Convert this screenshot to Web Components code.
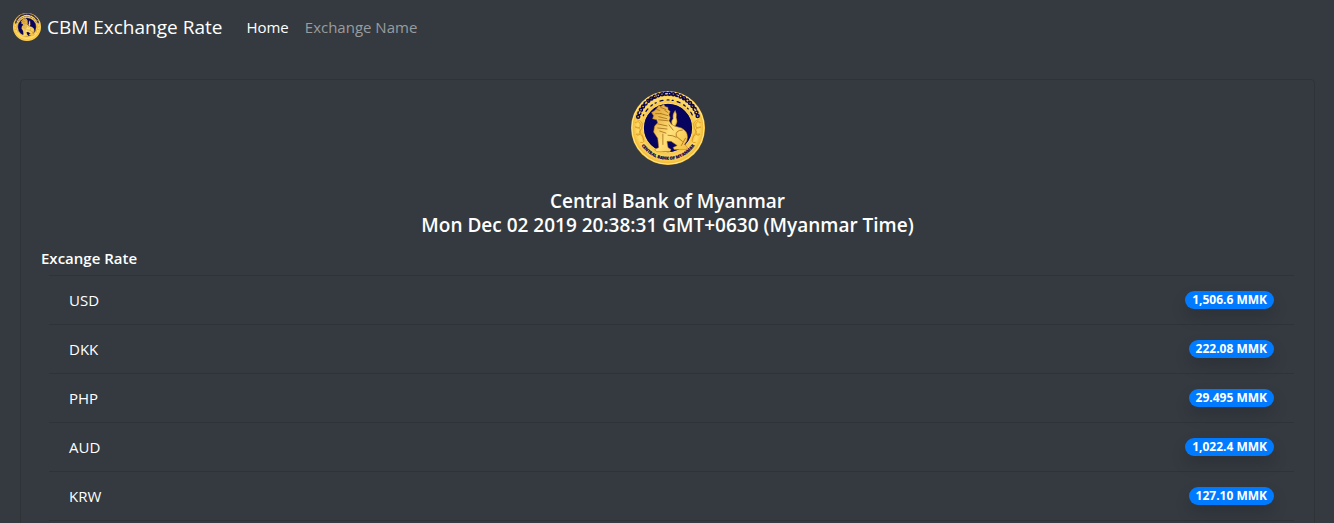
<!DOCTYPE html>
<html lang="en">
<head>
<meta charset="utf-8">
<title>CBM Exchange Rate</title>
<style>
  body { margin: 0; background: #343a40; color: #fff; font: 15px/24px "Open Sans", "Noto Sans", sans-serif; }
</style>
</head>
<body>
<cbm-navbar>
  <cbm-nav-link href="#home" active>Home</cbm-nav-link>
  <cbm-nav-link href="#names">Exchange Name</cbm-nav-link>
</cbm-navbar>
<cbm-card>
  <span slot="title">Central Bank of Myanmar</span>
  <span slot="time">Mon Dec 02 2019 20:38:31 GMT+0630 (Myanmar Time)</span>
  <span slot="label">Excange Rate</span>
  <cbm-rate currency="USD">1,506.6 MMK</cbm-rate>
  <cbm-rate currency="DKK">222.08 MMK</cbm-rate>
  <cbm-rate currency="PHP">29.495 MMK</cbm-rate>
  <cbm-rate currency="AUD">1,022.4 MMK</cbm-rate>
  <cbm-rate currency="KRW">127.10 MMK</cbm-rate>
</cbm-card>

<script>
const define = (name, html, setup) => customElements.define(name, class extends HTMLElement {
  constructor() {
    super();
    this.attachShadow({ mode: 'open' }).innerHTML = html;
  }
  connectedCallback() { if (setup) setup(this, this.shadowRoot); }
});

define('cbm-seal', `
  <style>
    :host { display: block; width: 74px; height: 74px; flex: none; }
    svg { display: block; width: 100%; height: 100%; }
    text { font: 800 4px "Open Sans", sans-serif; fill: #0c0850; stroke: #0c0850; stroke-width: .2px; }
    :host([small]) text { display: none; }
  </style>
  <svg viewBox="0 0 72 72" role="img" aria-label="Central Bank of Myanmar seal">
    <defs>
      <radialGradient id="gold" cx=".5" cy=".5" r=".5">
        <stop offset=".62" stop-color="#f4bd3a"/><stop offset=".82" stop-color="#ffdc68"/><stop offset="1" stop-color="#efae25"/>
      </radialGradient>
      <linearGradient id="lion" x1="0" y1="0" x2="1" y2="1">
        <stop offset="0" stop-color="#dd9a2c"/><stop offset=".55" stop-color="#ffe07a"/><stop offset="1" stop-color="#f3bd3d"/>
      </linearGradient>
      <path id="arc" d="M7 46.500A30.800 30.800 0 0 0 65 46.500"/>
    </defs>
    <circle cx="36" cy="36" r="36" fill="url(#gold)"/>
    <circle cx="36" cy="36" r="35" fill="none" stroke="#ffe98c" stroke-width="1"/>
    <g fill="none" stroke="#dc9820" stroke-width=".8">
      <path d="M4 31q5-3 5 2t-5 2q6 0 5 5t-4 2q5-1 7 4t-3 4M68 31q-5-3-5 2t5 2q-6 0-5 5t4 2q-5-1-7 4t3 4"/>
      <path d="M6 28q5 1 5 5t-3 7q4 2 4 8M66 28q-5 1-5 5t3 7q-4 2-4 8"/>
    </g>
    <circle cx="36" cy="36" r="24" fill="#06045f" stroke="#ffdc69" stroke-width="1"/>
    <g fill="none" stroke-linecap="round">
      <path d="M7 25A30 30 0 0 1 65 25" stroke="#0c0850" stroke-width="4.400" stroke-dasharray="0 3.700"/>
      <path d="M7 25A30 30 0 0 1 65 25" stroke="#f5c548" stroke-width="1.500" stroke-dasharray="0 3.700 1.500 2.200 0 3.700"/>
      <path d="M12 14A33 33 0 0 1 61 15" stroke="#0c0850" stroke-width="1.200" stroke-dasharray="2 4 1 3 5 6"/>
      <path d="M12 24A26.500 26.500 0 0 1 60 24" stroke="#0c0850" stroke-width="1.200" stroke-dasharray="1 4 3 4 2 3"/>
    </g>
    <g fill="url(#lion)" stroke="#b97718" stroke-width=".5" stroke-linejoin="round">
      <path d="M41 34q-3-4 0-7-1-4 2-8 2 4 1 7 2 4-1 8z"/>
      <path d="M25 17l2-3 2 1 3-2 1 2 3 1 0 2 2 2-1 3 1 3-1 3 2 3 3 2 7 2q6 3 6 9 0 4-3 7l3 3-1 2H42l-1-2 4-2-6-4-4 0 1 6 3 2-1 2H25l-2-2 4-2-1-9-4-6 1-6 3-3-1-3-4-1 1-3-2-3 3-2z"/>
    </g>
    <g fill="none" stroke="#99600f" stroke-width=".7" stroke-linecap="round">
      <path d="M25 18l3 1M24 22h5M29 16l5 2M33 19l3 2M29 22l7 2M27 25l8 2M27 28l9 1M26 32l9 2M26 36l9 1M28 39l6 2M37 33l4 5M50 38q-7 0-6 6l6 5M31 42v10M53 46l-4 7M36 43q5 0 8 2"/>
    </g>
    <text><textPath href="#arc" startOffset="50%" text-anchor="middle">CENTRAL BANK OF MYANMAR</textPath></text>
  </svg>`);

define('cbm-nav-link', `
  <style>
    :host { display: block; }
    a { display: block; padding: 8px; color: #999c9f; text-decoration: none; }
    :host([active]) a { color: #fff; }
  </style>
  <a><slot></slot></a>`, (el, root) => {
    root.querySelector('a').href = el.getAttribute('href');
  });

define('cbm-navbar', `
  <style>
    :host { display: block; }
    nav { display: flex; align-items: center; gap: 16px; padding: 7px 13px 9px; }
    .brand { display: flex; align-items: center; gap: 6px; color: #fff; font-size: 19px; line-height: 30px; text-decoration: none; white-space: nowrap; }
    cbm-seal { width: 28px; height: 28px; }
    .links { display: flex; }
  </style>
  <nav>
    <a class="brand" href="#home"><cbm-seal small></cbm-seal><span>CBM Exchange Rate</span></a>
    <div class="links"><slot></slot></div>
  </nav>`);

define('cbm-rate', `
  <style>
    :host { display: flex; align-items: center; justify-content: space-between; padding: 12px 20px; border-bottom: 1px solid #2e3338; }
    .badge { padding: 3px 7px; border-radius: 10px; background: #007bff; font-size: 12px; line-height: 12px; font-weight: 700; box-shadow: 0 8px 16px rgba(0,0,0,.15); }
  </style>
  <span class="name"></span>
  <span class="badge"><slot></slot></span>`, (el, root) => {
    root.querySelector('.name').textContent = el.getAttribute('currency');
  });

define('cbm-card', `
  <style>
    :host { display: block; margin: 23px 19px 20px 20px; padding: 11px 20px 20px; border: 1px solid #2e3338; border-radius: 4px; }
    cbm-seal { margin: 0 auto 24px; }
    h5 { margin: 0; font-size: 19px; line-height: 24px; font-weight: 600; text-align: center; }
    h5 ::slotted(span) { display: block; }
    h6 { margin: 9px 0 5px; font-size: 15px; line-height: 24px; font-weight: 600; }
    .rates { margin-left: 8px; border-top: 1px solid #2e3338; }
  </style>
  <cbm-seal></cbm-seal>
  <h5><slot name="title"></slot><slot name="time"></slot></h5>
  <h6><slot name="label"></slot></h6>
  <div class="rates"><slot></slot></div>`);
</script>
</body>
</html>
